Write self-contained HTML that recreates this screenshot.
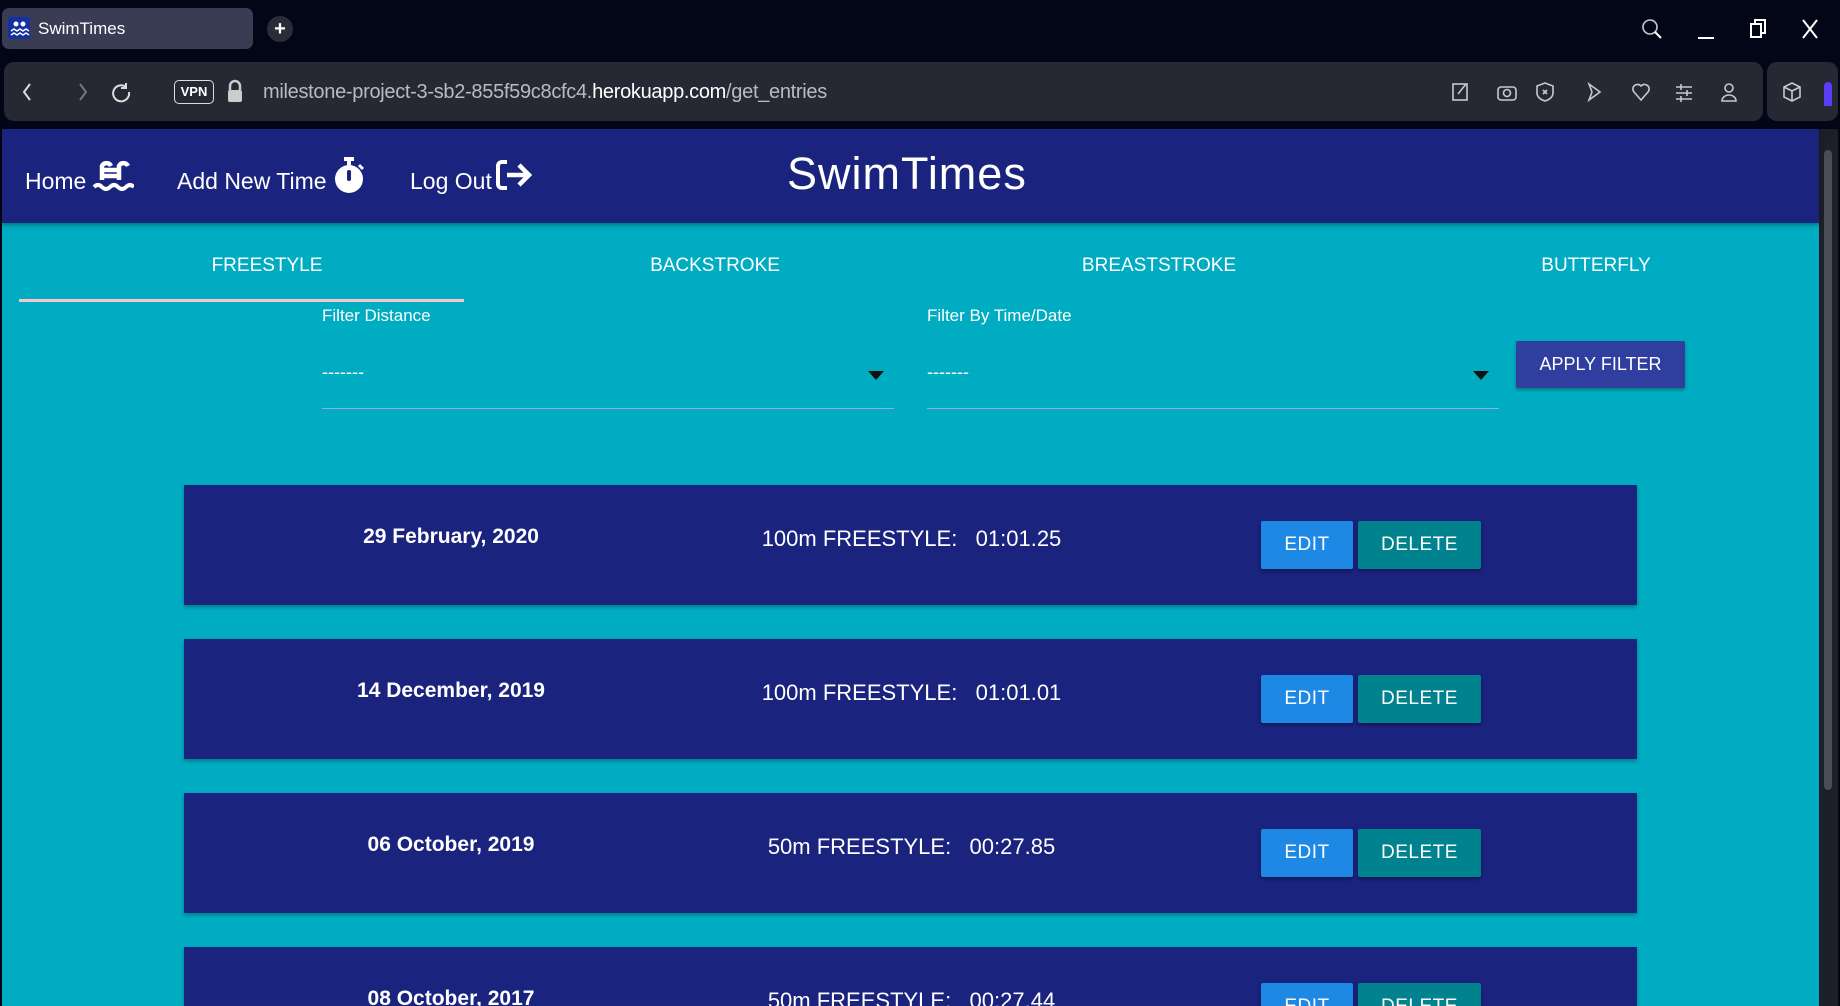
<!DOCTYPE html>
<html style="width:1840px;height:1006px;overflow:hidden"><head><meta charset="utf-8">
<style>
*{box-sizing:border-box;margin:0;padding:0}
body{width:1840px;height:1006px;overflow:hidden;background:#030616;font-family:"Liberation Sans",sans-serif}
#wrap{position:relative;width:1840px;height:1006px;overflow:hidden;background:#030616}
.abs{position:absolute}
.tab{left:2px;top:8px;width:251px;height:41px;background:#393c52;border-radius:7px}
.addr{left:4px;top:62px;width:1759px;height:59px;background:#262833;border-radius:10px}
.ext{left:1767px;top:62px;width:71px;height:59px;background:#262833;border-radius:10px}
.page{left:2px;top:129px;width:1817px;height:877px;background:#00acc1}
.nav{left:2px;top:129px;width:1817px;height:94px;background:#1a237e;box-shadow:0 2px 4px rgba(0,0,0,.35)}
.sb{left:1819px;top:129px;width:19px;height:877px;background:#1c1e28}
.w{color:#fff}
.navt{font-size:23px;top:168px}
.tabt{font-size:19px;color:#fff;top:255px;transform:translateX(-50%)}
.lbl{font-size:17px;color:#fff;top:306px}
.sel{top:362px;font-size:18px;color:#fff;border-bottom:1px solid #9ad;height:47px}
.card{left:184px;width:1453px;height:120px;background:#1a237e;box-shadow:0 2px 4px rgba(0,0,0,.3)}
.date{position:absolute;left:267px;width:0;top:40px;font-size:21px;font-weight:bold;color:#fff;white-space:nowrap;display:flex;justify-content:center}
.ev{position:absolute;left:572px;width:311px;top:41px;font-size:22px;color:#fff;white-space:pre;text-align:center}
.btn{position:absolute;top:36px;height:48px;color:#fff;font-size:19px;text-align:center;line-height:48px;border-radius:2px;box-shadow:0 2px 3px rgba(0,0,0,.35);letter-spacing:.5px}
.e{left:1077px;width:92px;background:#1e88e5}
.d{left:1174px;width:123px;background:#00838f}
.ic{stroke:#c8c9d0;fill:none;stroke-width:1.6}
</style></head><body><div id="wrap">
<div class="abs tab"></div>
<div class="abs" style="left:8px;top:17px;width:22px;height:22px;background:#1530a0;border-radius:3px"></div>
<svg class="abs" style="left:8px;top:17px" width="22" height="22"><circle cx="8" cy="7" r="2.5" fill="#fff"/><circle cx="15" cy="7" r="2.5" fill="#fff"/><path d="M3 14l3-2 3 2 3-2 3 2 3-2 3 2M3 18l3-2 3 2 3-2 3 2 3-2 3 2" stroke="#fff" stroke-width="1.5" fill="none"/></svg>
<div class="abs w" style="left:38px;top:19px;font-size:17px">SwimTimes</div>
<div class="abs" style="left:267px;top:16px;width:26px;height:26px;border-radius:50%;background:#2a2c38;color:#fff;text-align:center;line-height:26px;font-size:20px;font-weight:bold">+</div>
<svg class="abs" style="left:1636px;top:16px" width="200" height="28"><circle cx="14" cy="11" r="7" class="ic" stroke="#fff" stroke-width="2"/><path d="M19 16l6 6" stroke="#fff" stroke-width="2"/><path d="M62 22h16" stroke="#fff" stroke-width="2"/><rect x="115" y="8" width="10" height="13" stroke="#fff" stroke-width="2" fill="none"/><path d="M119 8V4h10v13h-4" stroke="#fff" stroke-width="2" fill="none"/><path d="M167 4l14 18M181 4l-14 18" stroke="#fff" stroke-width="2"/></svg>
<div class="abs addr"></div>
<div class="abs ext"></div>
<svg class="abs" style="left:18px;top:80px" width="120" height="24"><path d="M12 4l-6 8 6 8" stroke="#ddd" stroke-width="2" fill="none"/><path d="M62 4l6 8-6 8" stroke="#777" stroke-width="2" fill="none"/><path d="M118 7a8 8 0 1 0 3 5M118 3v5h-5" stroke="#ddd" stroke-width="2" fill="none" transform="translate(-10,0)"/></svg>
<div class="abs" style="left:174px;top:80px;width:40px;height:24px;border:1.5px solid #ddd;border-radius:5px;color:#fff;font-size:13px;font-weight:bold;text-align:center;line-height:21px">VPN</div>
<svg class="abs" style="left:225px;top:79px" width="20" height="26"><path d="M5 11V7a5 5 0 0 1 10 0v4" stroke="#ccc" stroke-width="2.5" fill="none"/><rect x="3" y="11" width="14" height="12" rx="2" fill="#ccc"/></svg>
<div class="abs" style="left:263px;top:81px;font-size:20px;color:#b8bac4;letter-spacing:-0.3px">milestone-project-3-sb2-855f59c8cfc4.<span style="color:#fff">herokuapp.com</span>/get_entries</div>
<svg class="abs" style="left:1448px;top:78px" width="300" height="28"><rect x="5" y="6" width="14" height="16" class="ic"/><path d="M10 16l8-10" class="ic"/><rect x="50" y="9" width="18" height="13" rx="3" class="ic"/><circle cx="59" cy="15" r="3.5" class="ic"/><path d="M97 5l8 3v7c0 4-4 7-8 8-4-1-8-4-8-8V8z" class="ic"/><path d="M95 12l4 4M99 12l-4 4" class="ic"/><path d="M141 6l11 8-11 8 3-8z" class="ic"/><path d="M193 22l-7-8a4 4 0 0 1 7-6 4 4 0 0 1 7 6z" class="ic"/><path d="M228 9h16M228 15h16M228 21h16M233 6v6M239 12v6M233 18v6" class="ic"/><circle cx="281" cy="10" r="4" class="ic"/><path d="M274 23a7 6 0 0 1 14 0z" class="ic"/></svg>
<svg class="abs" style="left:1780px;top:80px" width="60" height="26"><path d="M12 3l8 4v10l-8 4-8-4V7zM4 7l8 4 8-4M12 11v10" class="ic"/><rect x="44" y="2" width="8" height="30" rx="4" fill="#5b3cf5"/></svg>

<div class="abs page"></div>
<div class="abs sb"></div>
<div class="abs" style="left:1824px;top:150px;width:8px;height:640px;background:#4a4c58;border-radius:4px"></div>
<div class="abs nav"></div>
<div class="abs w navt" style="left:25px">Home</div>
<svg class="abs" style="left:92px;top:158px" width="42" height="34"><path d="M10 22V8a5 5 0 0 1 9 0M27 22V8a5 5 0 0 1 9 0M10 12h17M10 18h17" stroke="#fff" stroke-width="4.5" fill="none"/><path d="M2 29q4-4 8 0t8 0 8 0 8 0 8 0" stroke="#fff" stroke-width="4" fill="none"/></svg>
<div class="abs w navt" style="left:177px">Add New Time</div>
<svg class="abs" style="left:333px;top:156px" width="32" height="38"><rect x="11" y="1" width="10" height="4" fill="#fff"/><rect x="14" y="4" width="4" height="5" fill="#fff"/><circle cx="16" cy="23" r="14" fill="#fff"/><rect x="14" y="14" width="4" height="11" rx="2" fill="#1a237e"/><path d="M26 9l4 4" stroke="#fff" stroke-width="3"/></svg>
<div class="abs w navt" style="left:410px">Log Out</div>
<svg class="abs" style="left:495px;top:158px" width="40" height="34"><path d="M12 4H7a4 4 0 0 0-4 4v18a4 4 0 0 0 4 4h5" stroke="#fff" stroke-width="4" fill="none"/><path d="M12 17h22M24 7l10 10-10 10" stroke="#fff" stroke-width="4.5" fill="none"/></svg>
<div class="abs w" style="left:787px;top:148px;font-size:45px;letter-spacing:1px">SwimTimes</div>

<div class="abs tabt" style="left:267px">FREESTYLE</div>
<div class="abs tabt" style="left:715px">BACKSTROKE</div>
<div class="abs tabt" style="left:1159px">BREASTSTROKE</div>
<div class="abs tabt" style="left:1596px">BUTTERFLY</div>
<div class="abs" style="left:19px;top:299px;width:445px;height:3px;background:#f6c6d0"></div>
<div class="abs lbl" style="left:322px">Filter Distance</div>
<div class="abs lbl" style="left:927px">Filter By Time/Date</div>
<div class="abs sel" style="left:322px;width:572px">-------</div>
<div class="abs sel" style="left:927px;width:572px">-------</div>
<div class="abs" style="left:868px;top:371px;border:8px solid transparent;border-top:9px solid #111;border-bottom:0"></div>
<div class="abs" style="left:1473px;top:371px;border:8px solid transparent;border-top:9px solid #111;border-bottom:0"></div>
<div class="abs" style="left:1516px;top:341px;width:169px;height:47px;background:#303f9f;color:#fff;font-size:18px;line-height:47px;text-align:center;border-radius:2px;box-shadow:0 2px 3px rgba(0,0,0,.3)">APPLY FILTER</div>

<div class="abs card" style="top:485px"><div class="date">29 February, 2020</div><div class="ev">100m FREESTYLE:   01:01.25</div><div class="btn e">EDIT</div><div class="btn d">DELETE</div></div>
<div class="abs card" style="top:639px"><div class="date">14 December, 2019</div><div class="ev">100m FREESTYLE:   01:01.01</div><div class="btn e">EDIT</div><div class="btn d">DELETE</div></div>
<div class="abs card" style="top:793px"><div class="date">06 October, 2019</div><div class="ev">50m FREESTYLE:   00:27.85</div><div class="btn e">EDIT</div><div class="btn d">DELETE</div></div>
<div class="abs card" style="top:947px;height:59px;overflow:hidden"><div class="date">08 October, 2017</div><div class="ev">50m FREESTYLE:   00:27.44</div><div class="btn e">EDIT</div><div class="btn d">DELETE</div></div>
</div></body></html>
